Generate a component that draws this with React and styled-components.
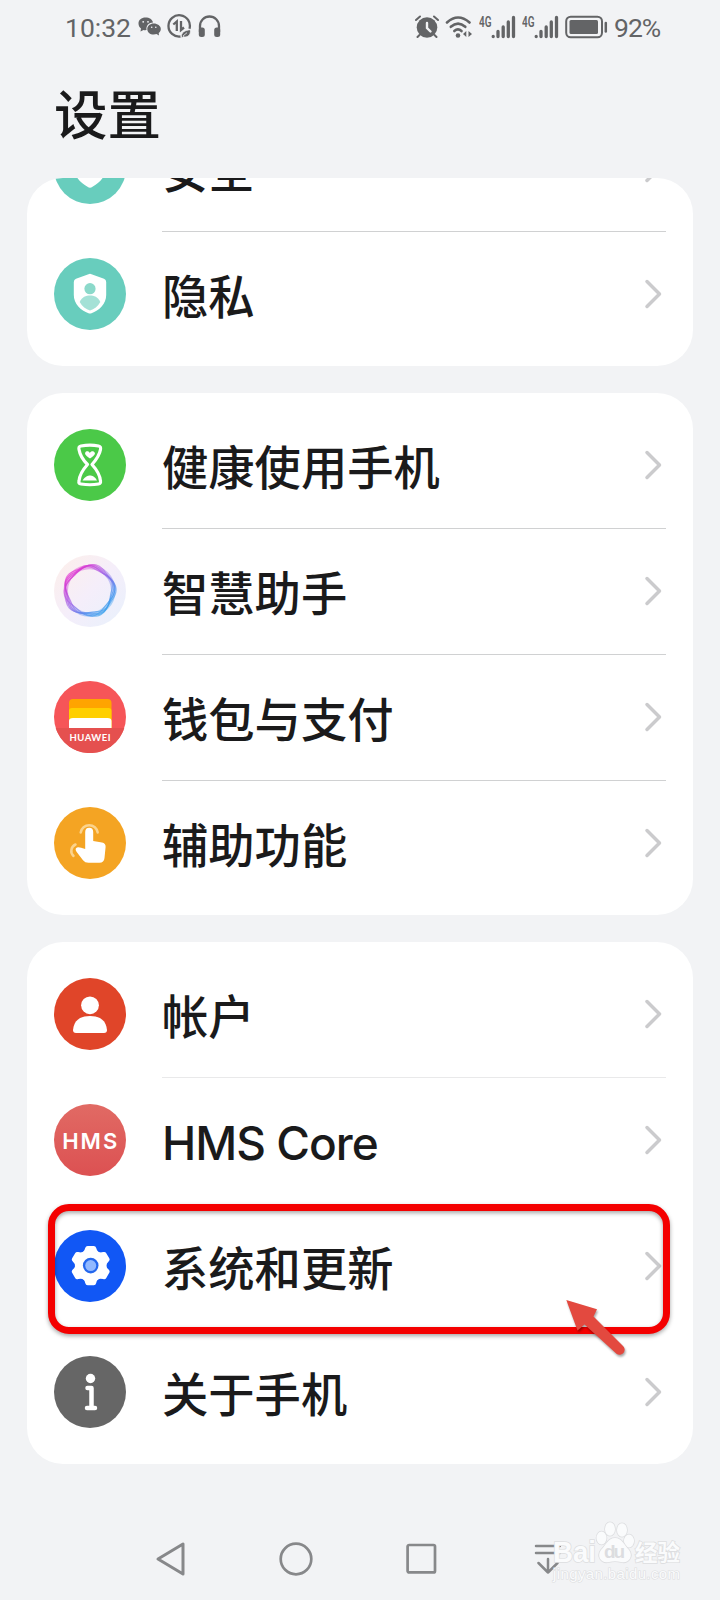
import React from "react";
import styled, { createGlobalStyle, css } from "styled-components";

const GlobalStyle = createGlobalStyle`
  * { box-sizing: border-box; }
  body { margin: 0; background: #f2f3f5; }
`;

const Screen = styled.div`
  position: relative;
  width: 720px;
  height: 1600px;
  overflow: hidden;
  display: flex;
  flex-direction: column;
  background: #f2f3f5;
  color: #1a1a1b;
  font-family: "Noto Sans", "Noto Sans CJK SC", sans-serif;
`;

const StatusBar = styled.header`
  height: 53px;
  padding: 0 60px 0 65px;
  display: flex;
  align-items: center;
  justify-content: space-between;
  color: #636466;
`;

const StatusGroup = styled.div`
  display: flex;
  align-items: center;
  gap: ${(p) => p.$gap}px;
  svg { display: block; }
`;

const StatusText = styled.span`
  font: 400 26.5px/32px Roboto, sans-serif;
  letter-spacing: ${(p) => p.$spacing || 0}px;
  width: ${(p) => p.$width}px;
  white-space: nowrap;
  padding-top: 2px;
`;

const Title = styled.h1`
  margin: 0;
  height: 125px;
  padding: 21px 0 0 54px;
  font: 500 53.5px/76px "Noto Sans CJK SC", sans-serif;
`;

const List = styled.main`
  padding: 0 27px;
  display: flex;
  flex-direction: column;
  gap: 27px;
`;

const Card = styled.section`
  position: relative;
  background: #fff;
  border-radius: 36px;
  padding: 9px 0;
  ${(p) =>
    p.$scrolled &&
    css`
      height: 188px;
      padding-top: 0;
      display: flex;
      flex-direction: column;
      justify-content: flex-end;
      overflow: hidden;
    `}
`;

const Row = styled.div`
  position: relative;
  height: 126px;
  flex: none;
  padding: 0 27px;
  display: flex;
  gap: 36px;
`;

const Badge = styled.svg`
  display: block;
  width: 72px;
  height: 72px;
  flex: none;
  align-self: center;
`;

const RowBody = styled.div`
  flex: 1;
  display: flex;
  align-items: center;
  justify-content: space-between;
  margin-bottom: -1px;
  padding: 0 4px 0 0;
  border-bottom: 1px solid ${(p) => p.$divider || "transparent"};
`;

const Label = styled.span`
  font-family: ${(p) => (p.$latin ? "Inter" : '"Noto Sans CJK SC"')}, sans-serif;
  font-weight: 500;
  font-size: ${(p) => (p.$latin ? 46 : 46.3)}px;
  line-height: 66px;
  letter-spacing: ${(p) => (p.$latin ? -1 : 0)}px;
  padding-top: ${(p) => (p.$latin ? 6 : 0)}px;
`;

const Highlight = styled.div`
  position: absolute;
  left: 21px;
  top: 1px;
  width: 622px;
  height: 130px;
  border: 7px solid #f40000;
  border-radius: 21px;
  filter: drop-shadow(0 2px 2px rgba(0, 0, 0, 0.35));
`;

const Pointer = styled.svg`
  position: absolute;
  left: 533px;
  top: 91px;
  overflow: visible;
  filter: drop-shadow(1px 2px 1px rgba(0, 0, 0, 0.35));
`;

const NavBar = styled.nav`
  margin-top: auto;
  height: 83px;
  padding-left: 108px;
  display: flex;
`;

const NavItem = styled.div`
  width: 125.5px;
  display: flex;
  justify-content: center;
  align-items: center;
`;

const Watermark = styled.svg`
  position: absolute;
  left: 545px;
  top: 1515px;
`;

const Chevron = () => (
  <svg width="18" height="30" viewBox="0 0 18 30">
    <path d="M3 2.500 15.500 15 3 27.500" fill="none" stroke="#cbcbcd" strokeWidth="3.500" strokeLinecap="round" strokeLinejoin="round" />
  </svg>
);

const Disc = ({ fill, children }) => (
  <Badge viewBox="-36 -36 72 72">
    <circle r="36" fill={fill} />
    {children}
  </Badge>
);

const SecurityIcon = () => (
  <Disc fill="#68cdbd">
    <path d="M0-20.500 16-14.500V-1C16 9 9 15 2.500 18.800Q0 20.800-2.500 18.800C-9 15-16 9-16-1V-14.500Z" fill="#fff" />
  </Disc>
);

const PrivacyIcon = () => (
  <Disc fill="#68cdbd">
    <path
      d="M-1.500-19.800Q0-20.500 1.500-19.800L14-15.200Q16.200-14.200 16.200-12V1C16.200 10 9 16.500 1.500 19.300Q0 19.900-1.500 19.300C-9 16.500-16.200 10-16.200 1V-12Q-16.200-14.200-14-15.200Z"
      fill="#fff"
    />
    <circle cy="-5.300" r="5.600" fill="#8bd9ca" />
    <path d="M-10.300 8C-8 2.800-4 1.500 0 1.500S8 2.800 10.300 8C8 12.500 4 15 0 16.500C-4 15-8 12.500-10.300 8Z" fill="#a4e1d6" />
  </Disc>
);

const HourglassIcon = () => (
  <Disc fill="#4bc948">
    <path
      d="M-9-19C-4-20 4-20 8.500-19C10.500-18.500 11-18 10.500-15.500C9.500-9.500 6-5 2-.500C6.500 4.500 10 9.500 10.500 16C10.800 18 10 18.800 8.500 19C4 19.800-4 19.800-9 19C-11 18.800-11.500 18-11 16C-10.500 9.500-7 4.500-2.500-.500C-7-5-10-9.500-11-15.500C-11.500-18-11-18.500-9-19Z"
      fill="none"
      stroke="#fff"
      strokeWidth="3.200"
      strokeLinejoin="round"
    />
    <path d="M0-6.500C-3-8.500-5.500-10.500-4.800-12.300C-4-14.300-1-14-.2-12C1-14.500 4-14.300 4.800-12.300C5.500-10.500 3-8.500 0-6.500Z" fill="#fff" />
    <path d="M-7.500 15.500C-5 11.500-2 10.500 0 10.500S5 11.500 7 15.500Z" fill="#fff" />
  </Disc>
);

const wave = (base, amp, lobes, phase) => {
  const points = [];
  for (let i = 0; i < 90; i++) {
    const a = (i / 90) * Math.PI * 2;
    const r = base + amp * Math.cos(lobes * a + phase);
    points.push(`${(r * Math.cos(a) - 0.5).toFixed(2)} ${(r * Math.sin(a) - 0.3).toFixed(2)}`);
  }
  return `M${points.join("L")}Z`;
};

const RING_WAVES = [
  wave(25.2, 1.4, 5, 0.3),
  wave(24.4, 1.4, 5, 0.9),
  wave(23.6, 1.3, 5, 1.4),
  wave(22.8, 1.3, 5, 2.2),
  wave(23.6, 1.7, 4, 0.4),
];

const AssistantIcon = () => (
  <Badge viewBox="-36 -36 72 72">
    <defs>
      <linearGradient id="assistBg" x1="0" y1="0" x2="1" y2="1">
        <stop offset="0" stopColor="#fdefe9" />
        <stop offset=".5" stopColor="#f5eefa" />
        <stop offset="1" stopColor="#e8f1fc" />
      </linearGradient>
      <linearGradient id="assistRing" gradientUnits="userSpaceOnUse" x1="-18" y1="-18" x2="16" y2="20">
        <stop offset="0" stopColor="#e030cf" />
        <stop offset=".45" stopColor="#9b66e8" />
        <stop offset=".8" stopColor="#4a90ee" />
        <stop offset="1" stopColor="#3aa2ec" />
      </linearGradient>
    </defs>
    <circle r="36" fill="url(#assistBg)" />
    <g fill="none" stroke="url(#assistRing)">
      <circle cx="-.5" cy="-.3" r="23.800" strokeWidth="4.500" opacity=".4" />
      {RING_WAVES.map((d) => (
        <path key={d} d={d} strokeWidth="1.200" opacity=".6" />
      ))}
    </g>
  </Badge>
);

const WalletIcon = () => (
  <Disc fill="#f65558">
    <path d="M-34.300 11H34.300A36 36 0 0 1-34.300 11Z" fill="#e5504f" />
    <path d="M-21 11V-14Q-21-18-17-18H17.500Q21.500-18 21.500-14V11Z" fill="#ffa400" />
    <path d="M-21 11V-6Q-21-9-18-9H18.500Q21.500-9 21.500-6V11Z" fill="#ffcf00" />
    <path d="M-21 11V4Q-21 1-17 1H17.500Q21.500 1 21.500 4V11Z" fill="#fff" />
    <text x="0" y="23.500" fill="#fff" fontFamily="Lato, sans-serif" fontWeight="700" fontSize="9.500" textAnchor="middle" textLength="41">
      HUAWEI
    </text>
  </Disc>
);

const TouchIcon = () => (
  <Disc fill="#f4a423">
    <g fill="none" stroke="#fbd38d" strokeWidth="2.500" strokeLinecap="round">
      <path d="M-9.300-10.500A8.600 8.600 0 0 1 7.700-10.500" />
      <path d="M-14.500 1.500A7 7 0 0 0-16.500 13" />
    </g>
    <path
      d="M-4.800-11Q-4.800-15.300-.8-15.300T3.200-11V-2L12-.5Q15.800.3 15.600 4L14.500 15Q14 19.800 9.500 19.800H-1.500Q-5 19.800-7 17.300L-13.500 8.800Q-15.500 5.500-13 4.500Q-11 3.700-4.800 6Z"
      fill="#fff"
    />
  </Disc>
);

const AccountIcon = () => (
  <Disc fill="#e04529">
    <circle cy="-8.700" r="8.900" fill="#fff" />
    <path d="M-17 16C-16 7-11 2 0 2S16 7 17 16Q17 19 14 19H-14Q-17 19-17 16Z" fill="#fff" />
  </Disc>
);

const HmsIcon = () => (
  <Disc fill="url(#hmsBg)">
    <defs>
      <linearGradient id="hmsBg" x1="0" y1="0" x2="0" y2="1">
        <stop offset="0" stopColor="#e16a64" />
        <stop offset="1" stopColor="#dc5152" />
      </linearGradient>
    </defs>
    <text x="-.3" y="8.500" fill="#fff" fontFamily="Inter, sans-serif" fontWeight="600" fontSize="22" textAnchor="middle" textLength="55">
      HMS
    </text>
  </Disc>
);

const GearIcon = () => (
  <Disc fill="#1157f5">
    <g fill="#fff" transform="translate(.7 -.4)">
      <circle r="15.800" />
      {[0, 60, 120].map((a) => (
        <path
          key={a}
          transform={`rotate(${a})`}
          d="M-3-19.700H3Q5-19.700 5.500-17.500Q6-15 8-13V13Q6 15 5.500 17.500Q5 19.700 3 19.700H-3Q-5 19.700-5.500 17.500Q-6 15-8 13V-13Q-6-15-5.500-17.500Q-5-19.700-3-19.700Z"
        />
      ))}
      <circle r="7.800" fill="#2467ed" />
      <circle r="5.500" fill="#92b9ff" />
    </g>
  </Disc>
);

const InfoIcon = () => (
  <Disc fill="#666">
    <circle cx=".5" cy="-13.500" r="4.700" fill="#fff" />
    <path d="M-2.500-4H1.500V16M-3 16H5" fill="none" stroke="#fff" strokeWidth="4.500" strokeLinecap="round" strokeLinejoin="round" />
  </Disc>
);

const WechatIcon = () => (
  <svg width="23" height="20" viewBox="0 0 23 20">
    <path d="M7.500.5C3.400.5.500 3 .500 6.500C.500 8.800 1.500 10.400 3 11.500L2.500 14.500L5.500 12.900C6.500 13.200 7.500 13.200 8.500 13.100C7.800 8.300 11 5.500 15 5.400C14.300 2.500 11.500.500 7.500.500Z" fill="currentColor" />
    <path d="M15.700 6.500C12 6.500 9.300 8.900 9.300 12S12 17.600 15.700 17.600C16.800 17.600 17.800 17.400 18.500 17.100L21 18.500L20.700 16C22 15 22.800 13.700 22.800 12C22.800 8.900 19.500 6.500 15.700 6.500Z" fill="currentColor" />
    <g fill="#f2f3f5">
      <circle cx="5.200" cy="4.800" r=".9" /><circle cx="10" cy="4.800" r=".9" />
      <circle cx="13.700" cy="10.300" r=".8" /><circle cx="17.800" cy="10.300" r=".8" />
    </g>
  </svg>
);

const DataSaverIcon = () => (
  <svg width="25" height="25" viewBox="0 0 25 25">
    <path d="M22 15A10.700 10.700 0 1 0 13 22.800" fill="none" stroke="currentColor" strokeWidth="2.300" transform="translate(.5 -.3)" />
    <path d="M6.300 10.500 9.800 7.500V17M14 7V16L17 13.500" fill="none" stroke="currentColor" strokeWidth="2.300" />
    <path d="M14.500 23.500C13.500 18.500 18 16 23.500 15.700C24 21.500 20 24 16 22.700L14.800 24ZM16 22 20 18.700" fill="currentColor" stroke="#f2f3f5" strokeWidth=".8" />
  </svg>
);

const HeadphonesIcon = () => (
  <svg width="23" height="23" viewBox="0 0 23 23">
    <path d="M2 17V11A9.500 9.500 0 0 1 21 11V17" fill="none" stroke="currentColor" strokeWidth="2.300" />
    <rect x=".8" y="12.500" width="6" height="9.500" rx="2.500" fill="currentColor" />
    <rect x="16.200" y="12.500" width="6" height="9.500" rx="2.500" fill="currentColor" />
  </svg>
);

const AlarmIcon = () => (
  <svg width="24" height="24" viewBox="0 0 24 24">
    <circle cx="12" cy="12.500" r="10.300" fill="currentColor" />
    <path d="M1 5 5 1.500M19 1.500 23 5M4.500 20 2.500 22M19.500 20 21.500 22" stroke="currentColor" strokeWidth="2" strokeLinecap="round" />
    <path d="M12 8V13L15.500 16.500" fill="none" stroke="#f2f3f5" strokeWidth="2.400" strokeLinecap="round" />
  </svg>
);

const WifiIcon = () => (
  <svg width="28" height="24" viewBox="0 0 28 24">
    <g fill="none" stroke="currentColor" strokeWidth="2.600" strokeLinecap="round">
      <path d="M2 7.500Q13 -2.500 24.500 7.500" />
      <path d="M5.800 11.800Q13 5.500 20.300 11.800" />
      <path d="M9.300 16Q13 12.800 16.500 16" />
    </g>
    <circle cx="13" cy="20.500" r="2.300" fill="currentColor" />
    <path d="M18 19 21.300 16V22ZM27 19 23.500 16V22Z" fill="currentColor" />
  </svg>
);

const SignalIcon = () => (
  <svg width="37" height="24" viewBox="0 0 37 24">
    <text x="0" y="11.500" fill="currentColor" fontFamily="Roboto, sans-serif" fontWeight="600" fontSize="14.500" textLength="12.500" lengthAdjust="spacingAndGlyphs">
      4G
    </text>
    <path d="M14.200 21.500V21.600M19 16.500V21.600M24.200 12V21.600M29.300 7V21.600M34.500 2.500V21.600" stroke="currentColor" strokeWidth="3.300" strokeLinecap="round" />
  </svg>
);

const BatteryIcon = () => (
  <svg width="43" height="24" viewBox="0 0 43 24">
    <rect x="1.200" y="1.700" width="35.800" height="20.600" rx="4.500" fill="none" stroke="currentColor" strokeWidth="2" />
    <rect x="4.500" y="5" width="28.500" height="14" rx="1.500" fill="currentColor" />
    <path d="M40.800 8V16.500" stroke="currentColor" strokeWidth="2.500" strokeLinecap="round" />
  </svg>
);

const GROUPS = [
  {
    scrolled: true,
    rows: [
      { label: "安全", Icon: SecurityIcon, divider: "#d0d1d2" },
      { label: "隐私", Icon: PrivacyIcon },
    ],
  },
  {
    rows: [
      { label: "健康使用手机", Icon: HourglassIcon, divider: "#d0d1d2" },
      { label: "智慧助手", Icon: AssistantIcon, divider: "#d0d1d2" },
      { label: "钱包与支付", Icon: WalletIcon, divider: "#d0d1d2" },
      { label: "辅助功能", Icon: TouchIcon },
    ],
  },
  {
    rows: [
      { label: "帐户", Icon: AccountIcon, divider: "#e9e9ea" },
      { label: "HMS Core", Icon: HmsIcon, latin: true },
      { label: "系统和更新", Icon: GearIcon, highlighted: true },
      { label: "关于手机", Icon: InfoIcon },
    ],
  },
];

const SettingRow = ({ label, Icon, divider, latin, highlighted }) => (
  <Row>
    <Icon />
    <RowBody $divider={divider}>
      <Label $latin={latin}>{label}</Label>
      <Chevron />
    </RowBody>
    {highlighted && (
      <>
        <Highlight />
        <Pointer width="70" height="66" viewBox="0 0 70 66">
          <path d="M6.300 6 37 15.200 33.500 22.500 62.500 51.500A4.700 4.700 0 0 1 56.500 59.800L24.500 30.500 17.500 36.500Z" fill="#e3493f" />
        </Pointer>
      </>
    )}
  </Row>
);

export default function App() {
  return (
    <Screen>
      <GlobalStyle />
      <StatusBar>
        <StatusGroup $gap={6}>
          <StatusText $width={67}>10:32</StatusText>
          <WechatIcon />
          <DataSaverIcon />
          <HeadphonesIcon />
        </StatusGroup>
        <StatusGroup $gap={6}>
          <AlarmIcon />
          <WifiIcon />
          <SignalIcon />
          <SignalIcon />
          <BatteryIcon />
          <StatusText $width={46} $spacing={-1}>92%</StatusText>
        </StatusGroup>
      </StatusBar>
      <Title>设置</Title>
      <List>
        {GROUPS.map((group, i) => (
          <Card key={i} $scrolled={group.scrolled}>
            {group.rows.map((row) => (
              <SettingRow key={row.label} {...row} />
            ))}
          </Card>
        ))}
      </List>
      <NavBar>
        <NavItem>
          <svg width="32" height="36" viewBox="0 0 32 36" fill="none" stroke="#87888a" strokeWidth="3" strokeLinejoin="round">
            <path d="M28 3V33L3 18Z" />
          </svg>
        </NavItem>
        <NavItem>
          <svg width="36" height="36" viewBox="0 0 36 36" fill="none" stroke="#87888a" strokeWidth="2.700">
            <circle cx="18" cy="18" r="15.300" />
          </svg>
        </NavItem>
        <NavItem>
          <svg width="32" height="32" viewBox="0 0 32 32" fill="none" stroke="#87888a" strokeWidth="2.700">
            <rect x="1.600" y="2" width="27.400" height="27.400" rx="1.500" />
          </svg>
        </NavItem>
        <NavItem>
          <svg width="28" height="32" viewBox="0 0 28 32" fill="none" stroke="#87888a" strokeWidth="2.500" strokeLinecap="round" strokeLinejoin="round">
            <path d="M3 3H27M3 10H27M15 16V29.500M5.500 20 15 29.500 24.500 20" />
          </svg>
        </NavItem>
      </NavBar>
      <Watermark width="145" height="75" viewBox="0 0 145 75">
        <g fill="#fafbfc" stroke="#dddee0" strokeWidth="1.600" paintOrder="stroke">
          <ellipse cx="56.500" cy="23" rx="5" ry="6.500" />
          <ellipse cx="65" cy="14" rx="5" ry="6.700" />
          <ellipse cx="77" cy="15" rx="5" ry="6.700" />
          <ellipse cx="84" cy="26" rx="5" ry="6.500" />
          <path d="M70 23C77 23 79 30 84 35C89 42 83 49 76 47C72 46 68 46 64 47C57 49 51 42 56 35C61 30 63 23 70 23Z" />
          <g fontFamily="Liberation Sans, sans-serif" fontWeight="700">
            <text x="8" y="47" fontSize="29" textLength="43" lengthAdjust="spacingAndGlyphs">Bai</text>
            <text x="59" y="43" fontSize="19" textLength="21" fill="#dcdde0" stroke="none">du</text>
          </g>
          <text x="90" y="46" fontFamily="Noto Sans CJK SC, sans-serif" fontWeight="700" fontSize="22.500">经验</text>
          <text x="8" y="63.500" fontFamily="Liberation Sans, sans-serif" fontSize="15" strokeWidth="1.200" textLength="127">jingyan.baidu.com</text>
        </g>
      </Watermark>
    </Screen>
  );
}
